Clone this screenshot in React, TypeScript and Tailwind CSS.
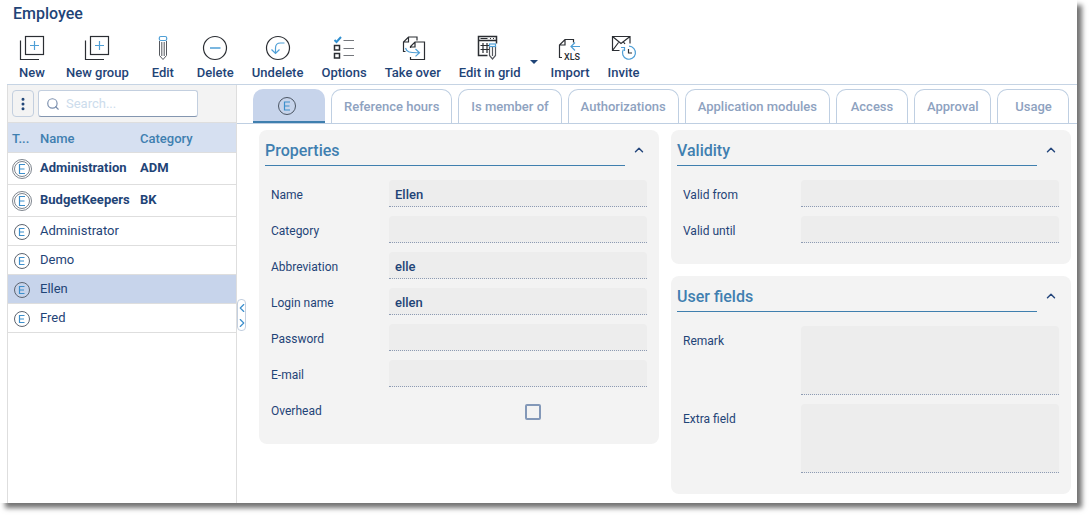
import { useState, type ReactNode } from "react";
import { ChevronUp, ChevronLeft, ChevronRight, EllipsisVertical, Search } from "lucide-react";

type Employee = {
  name: string;
  category: string;
  group: boolean;
};

const employees: Employee[] = [
  { name: "Administration", category: "ADM", group: true },
  { name: "BudgetKeepers", category: "BK", group: true },
  { name: "Administrator", category: "", group: false },
  { name: "Demo", category: "", group: false },
  { name: "Ellen", category: "", group: false },
  { name: "Fred", category: "", group: false },
];

const tabs = [
  "Reference hours",
  "Is member of",
  "Authorizations",
  "Application modules",
  "Access",
  "Approval",
  "Usage",
];

const dark = "#2b2e33";
const blue = "#4f9fd6";

function ToolIcon({ children }: { children: ReactNode }) {
  return (
    <svg width="26" height="26" viewBox="0 0 26 26" fill="none" stroke={dark} strokeWidth="1.2" aria-hidden="true">
      {children}
    </svg>
  );
}

const newIcon = (
  <ToolIcon>
    <rect x="6.5" y="1.5" width="18" height="18" />
    <path d="M1.5 5.5v19H20" />
    <path d="M15.5 6v9M11 10.5h9" stroke={blue} />
  </ToolIcon>
);

const editIcon = (
  <ToolIcon>
    <path d="M9.5 6v14.5l3.5 4 3.5-4V6M11.8 7v14M14.2 7v14" stroke="#55585e" strokeWidth="1" />
    <rect x="9.3" y="1.5" width="7.4" height="4" rx="1.5" stroke={blue} />
  </ToolIcon>
);

const deleteIcon = (
  <ToolIcon>
    <circle cx="13" cy="13" r="11.5" />
    <path d="M8 13h10.5" stroke={blue} strokeWidth="1.5" />
  </ToolIcon>
);

const undeleteIcon = (
  <ToolIcon>
    <circle cx="13" cy="13" r="11.5" />
    <path d="M19.5 8h-4c-3.5 0-5 2-5 5v5.5M6.5 14.5l4 4 4-4" stroke={blue} />
  </ToolIcon>
);

const optionsIcon = (
  <ToolIcon>
    <path d="M3.5 5l2 2 4.5-5" stroke="#2f8fd0" strokeWidth="2" />
    <rect x="3.5" y="10.5" width="5" height="4.5" strokeWidth="1.5" />
    <rect x="3.5" y="18.5" width="5" height="4.5" strokeWidth="1.5" />
    <path d="M12.5 5.5H23M12.5 13.5H23M12.5 20.5H23" stroke="#74777c" />
  </ToolIcon>
);

const takeOverIcon = (
  <ToolIcon>
    <path d="M5.5 16.5h-2V7l5-5H17v3.5M3.5 7h5V2" />
    <path d="M10.5 13v-1.5L15 7h9.5v17.5h-14V22M10.5 12H15V7" />
    <path d="M5.5 13c1 4 4 5 14 4.7M15.5 14l4 3.7-4 3.7" stroke={blue} />
  </ToolIcon>
);

const gridIcon = (
  <ToolIcon>
    <path d="M10.5 20.5h-9v-19h18v7M1.5 5.5h18" strokeWidth="1.5" />
    <path d="M3.5 3.5h7M13 3.5h1M16 3.5h1M6 8v10M10 8v10M3.5 10.5H12M3.5 14.5H12" />
    <path d="M12.5 11.5v9l3 3.5 3-3.5v-9M15.5 12v9" stroke="#55585e" />
    <rect x="12.5" y="9" width="6" height="2.5" stroke={blue} />
  </ToolIcon>
);

const importIcon = (
  <ToolIcon>
    <path d="M5 22.5H2.5V10L8 4.5h8.5v3M2.5 10H8V4.5" />
    <path d="M23 11.5h-8.5M18 7.5l-4 4 4 4" stroke={blue} />
    <text x="7" y="25" fontSize="9" fontWeight="500" fill={dark} stroke="none">
      XLS
    </text>
  </ToolIcon>
);

const inviteIcon = (
  <ToolIcon>
    <path d="M8.5 15.5h-7v-14H19v7M1.5 1.5l8.5 7 9-7M1.5 15.5l6-8M12.5 7l1.5 2" />
    <path d="M12.3 14.5a6.5 6.5 0 1 0 5.7-3.3M10 12.5h3.5V16" stroke={blue} />
    <path d="M17.5 14v4H21" />
  </ToolIcon>
);

const tools = [
  { label: "New", icon: newIcon },
  { label: "New group", icon: newIcon },
  { label: "Edit", icon: editIcon },
  { label: "Delete", icon: deleteIcon },
  { label: "Undelete", icon: undeleteIcon },
  { label: "Options", icon: optionsIcon },
  { label: "Take over", icon: takeOverIcon },
  { label: "Edit in grid", icon: gridIcon, menu: true },
  { label: "Import", icon: importIcon },
  { label: "Invite", icon: inviteIcon },
];

function EmployeeIcon({ group = false }: { group?: boolean }) {
  return (
    <svg width="20" height="20" viewBox="0 0 20 20" fill="none" stroke="#5c6470" aria-hidden="true">
      {group && <circle cx="10" cy="10" r="9.5" strokeWidth="0.8" />}
      <circle cx="10" cy="10" r="7.5" strokeWidth={group ? 0.8 : 1} />
      <path
        d={group ? "M13 5.5H7.5v9H13M7.5 10h5" : "M12.5 6.5h-5v7h5M7.5 10H12"}
        stroke="#3d8fcc"
        strokeWidth="1.2"
      />
    </svg>
  );
}

function Panel({ title, children }: { title: string; children: ReactNode }) {
  const [open, setOpen] = useState(true);

  return (
    <section className="rounded-lg bg-[#f3f3f3] px-1.5 pb-[21px]">
      <div className="flex items-center">
        <h2 className="h-9 flex-1 border-b border-[#3f7fae] pt-[9px] text-base leading-6 font-medium text-[#3f7fb0]">
          {title}
        </h2>
        <button
          type="button"
          aria-label={"Toggle " + title}
          onClick={() => setOpen(!open)}
          className="flex h-9 w-7 items-center justify-center pt-1 text-[#25477c]"
        >
          <ChevronUp size={14} strokeWidth={2.5} />
        </button>
      </div>
      {open && <div className="flex flex-col gap-[9px] px-1.5 pt-3.5">{children}</div>}
    </section>
  );
}

function Field({ id, label, value = "", type = "text" }: { id: string; label: string; value?: string; type?: string }) {
  return (
    <div className="flex">
      <label htmlFor={id} className="w-[118px] shrink-0 pt-1.5 text-xs leading-[18px]">
        {label}
      </label>
      <input
        id={id}
        type={type}
        defaultValue={value}
        className="h-[27px] min-w-0 flex-1 rounded-t border-b border-dotted border-[#8d9bb3] bg-[#ededed] px-1.5 pt-0.5 text-[13px] font-medium outline-none"
      />
    </div>
  );
}

function TextField({ id, label }: { id: string; label: string }) {
  return (
    <div className="flex">
      <label htmlFor={id} className="w-[118px] shrink-0 pt-1.5 text-xs leading-[18px]">
        {label}
      </label>
      <textarea
        id={id}
        className="h-[69px] min-w-0 flex-1 resize-none rounded-t border-b border-dotted border-[#8d9bb3] bg-[#ededed] px-1.5 py-1 text-[13px] font-medium outline-none"
      />
    </div>
  );
}

export default function App() {
  const [selected, setSelected] = useState("Ellen");

  return (
    <div className="min-h-screen bg-white pr-3.5 pb-3.5 font-['Roboto',sans-serif] text-[#1f4477]">
      <div className="flex min-h-[calc(100vh-14px)] flex-col bg-white pl-[7px] shadow-[5px_5px_5px_rgba(0,0,0,0.55)]">
        <h1 className="px-1.5 pt-1 text-base leading-5 font-medium">Employee</h1>

        <div className="flex items-start border-b border-[#c6d4e4] pt-[11px] pb-0.5">
          {tools.map((tool) => (
            <div key={tool.label} className="flex items-end">
              <button type="button" className="flex min-w-[50px] flex-col items-center px-[9px] text-[13px] leading-[18px] font-medium">
                {tool.icon}
                <span className="pt-[3px] whitespace-nowrap">{tool.label}</span>
              </button>
              {tool.menu && (
                <button type="button" aria-label="More grid options" className="flex h-[22px] w-3">
                  <svg width="8" height="4" viewBox="0 0 8 4" fill="#1f4477" aria-hidden="true">
                    <path d="M0 0h8L4 4z" />
                  </svg>
                </button>
              )}
            </div>
          ))}
        </div>

        <div className="flex flex-1">
          <aside className="relative w-[230px] shrink-0 border-x border-[#dedede]">
            <div className="flex items-center gap-1 border-b border-[#dedede] bg-[#f3f3f3] px-1 py-[5px]">
              <button type="button" aria-label="Menu" className="flex h-[27px] w-[22px] items-center justify-center rounded-sm border border-[#c3cfdf]">
                <EllipsisVertical size={16} strokeWidth={2.5} />
              </button>
              <label className="flex h-[27px] w-40 items-center gap-1.5 rounded-[3px] border border-[#c3cfdf] border-b-[#8496b0] bg-white px-[7px]">
                <Search size={14} className="shrink-0 text-[#7b8fae]" />
                <input
                  type="text"
                  placeholder="Search..."
                  aria-label="Search"
                  className="w-full min-w-0 text-[13px] outline-none placeholder:text-[#ccdcec]"
                />
              </label>
            </div>

            <table className="w-full table-fixed text-left text-[13px]">
              <colgroup>
                <col className="w-7" />
                <col className="w-[100px]" />
                <col />
              </colgroup>
              <thead>
                <tr className="h-[29px] border-b border-[#dedede] bg-[#d6e0f1] text-[#3f7fb0]">
                  <th className="pt-0.5 pl-1 font-medium">T...</th>
                  <th className="pt-0.5 pl-1 font-medium">Name</th>
                  <th className="pt-0.5 pl-1 font-medium">Category</th>
                </tr>
              </thead>
              <tbody>
                {employees.map((e) => (
                  <tr
                    key={e.name}
                    onClick={() => setSelected(e.name)}
                    className={
                      "border-b border-[#dedede] " +
                      (e.group ? "h-8 font-bold " : "h-[29px] ") +
                      (e.name === selected ? "bg-[#c7d4eb]" : "")
                    }
                  >
                    <td className="pt-0.5 pl-1">
                      <EmployeeIcon group={e.group} />
                    </td>
                    <td className="pl-1 whitespace-nowrap">{e.name}</td>
                    <td className="pl-1">{e.category}</td>
                  </tr>
                ))}
              </tbody>
            </table>

            <div className="absolute top-[214px] -right-2.5 flex h-8 w-[9px] flex-col items-center justify-around rounded-sm border border-[#c3cfdf] bg-white text-[#3d8fcc]">
              <button type="button" aria-label="Collapse list">
                <ChevronLeft size={14} />
              </button>
              <button type="button" aria-label="Expand list">
                <ChevronRight size={14} />
              </button>
            </div>
          </aside>

          <main className="min-w-0 flex-1">
            <nav className="flex gap-1.5 border-b border-[#bfcfe2] pt-1 pl-4">
              <button
                type="button"
                aria-label="Employee"
                className="flex h-[34px] w-[72px] items-center justify-center rounded-t-[10px] border-b-2 border-[#3f7fae] bg-[#c7d4eb] pt-0.5 pr-1"
              >
                <svg width="20" height="20" viewBox="0 0 20 20" fill="none" stroke="#4b5563" aria-hidden="true">
                  <circle cx="10" cy="10" r="8.5" />
                  <path d="M13 6H7.5v8H13M7.5 10h5" stroke="#3d8fcc" strokeWidth="1.2" />
                </svg>
              </button>
              {tabs.map((tab) => (
                <button
                  key={tab}
                  type="button"
                  className="h-[34px] min-w-[72px] rounded-t-[10px] border border-b-0 border-[#bfcfe2] px-3 text-[13px] font-medium whitespace-nowrap text-[#8ea2bf]"
                >
                  {tab}
                </button>
              ))}
            </nav>

            <div className="grid grid-cols-2 items-start gap-3 pt-1.5 pr-1.5 pb-[9px] pl-[22px]">
              <Panel title="Properties">
                <Field id="name" label="Name" value="Ellen" />
                <Field id="category" label="Category" />
                <Field id="abbreviation" label="Abbreviation" value="elle" />
                <Field id="login" label="Login name" value="ellen" />
                <Field id="password" label="Password" type="password" />
                <Field id="email" label="E-mail" type="email" />
                <div className="flex h-[27px]">
                  <label htmlFor="overhead" className="w-[118px] shrink-0 pt-1.5 text-xs leading-[18px]">
                    Overhead
                  </label>
                  <div className="flex flex-1 items-center justify-center pt-1 pl-[30px]">
                    <input
                      id="overhead"
                      type="checkbox"
                      className="size-4 appearance-none rounded-xs border-2 border-[#8398b8] checked:bg-[#8398b8]"
                    />
                  </div>
                </div>
              </Panel>

              <div className="flex flex-col gap-3">
                <Panel title="Validity">
                  <Field id="valid-from" label="Valid from" />
                  <Field id="valid-until" label="Valid until" />
                </Panel>
                <Panel title="User fields">
                  <TextField id="remark" label="Remark" />
                  <TextField id="extra" label="Extra field" />
                </Panel>
              </div>
            </div>
          </main>
        </div>
      </div>
    </div>
  );
}
